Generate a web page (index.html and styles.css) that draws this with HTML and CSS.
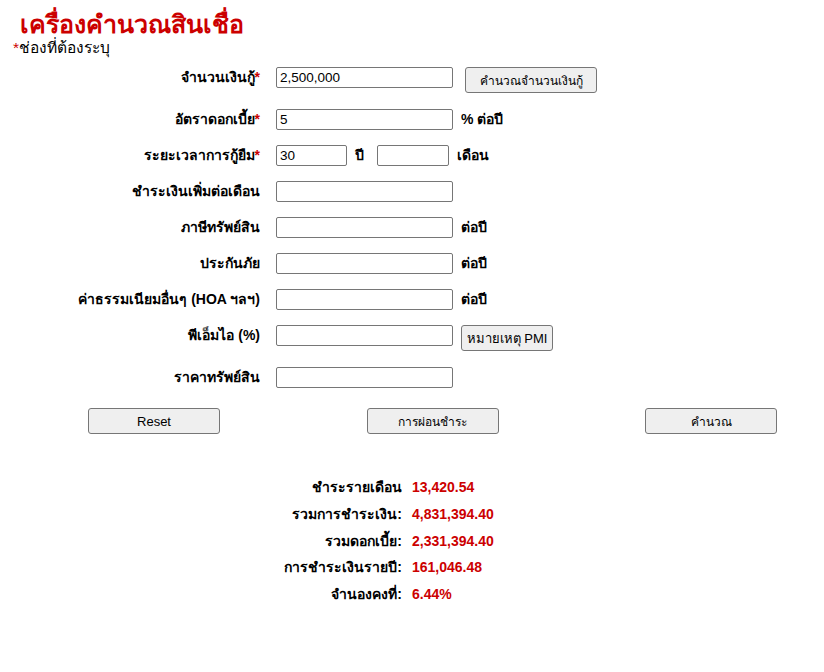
FILE: index.html
```html
<!DOCTYPE html>
<html lang="th">
<head>
<meta charset="utf-8">
<title>เครื่องคำนวณสินเชื่อ</title>
<link rel="stylesheet" href="styles.css">
</head>
<body>
<h1 class="title">เครื่องคำนวณสินเชื่อ</h1>
<div class="req-note"><span class="star">*</span>ช่องที่ต้องระบุ</div>

<form class="calc">
  <div class="row tall">
    <label class="lbl">จำนวนเงินกู้<span class="star">*</span></label>
    <input class="inp" type="text" value="2,500,000">
    <button type="button" class="btn btn-side wide">คำนวณจำนวนเงินกู้</button>
  </div>
  <div class="row">
    <label class="lbl">อัตราดอกเบี้ย<span class="star">*</span></label>
    <input class="inp" type="text" value="5">
    <span class="unit">% ต่อปี</span>
  </div>
  <div class="row">
    <label class="lbl">ระยะเวลาการกู้ยืม<span class="star">*</span></label>
    <input class="inp small" type="text" value="30">
    <span class="unit">ปี</span>
    <input class="inp small second" type="text" value="">
    <span class="unit">เดือน</span>
  </div>
  <div class="row">
    <label class="lbl">ชำระเงินเพิ่มต่อเดือน</label>
    <input class="inp" type="text" value="">
  </div>
  <div class="row">
    <label class="lbl">ภาษีทรัพย์สิน</label>
    <input class="inp" type="text" value="">
    <span class="unit">ต่อปี</span>
  </div>
  <div class="row">
    <label class="lbl">ประกันภัย</label>
    <input class="inp" type="text" value="">
    <span class="unit">ต่อปี</span>
  </div>
  <div class="row">
    <label class="lbl">ค่าธรรมเนียมอื่นๆ (HOA ฯลฯ)</label>
    <input class="inp" type="text" value="">
    <span class="unit">ต่อปี</span>
  </div>
  <div class="row tall">
    <label class="lbl">พีเอ็มไอ (%)</label>
    <input class="inp" type="text" value="">
    <button type="button" class="btn btn-pmi">หมายเหตุ PMI</button>
  </div>
  <div class="row">
    <label class="lbl">ราคาทรัพย์สิน</label>
    <input class="inp" type="text" value="">
  </div>

  <div class="actions">
    <button type="reset" class="btn btn-main reset">Reset</button>
    <button type="button" class="btn btn-main">การผ่อนชำระ</button>
    <button type="button" class="btn btn-main">คำนวณ</button>
  </div>
</form>

<div class="results">
  <div class="r-lbl">ชำระรายเดือน</div><div class="r-val">13,420.54</div>
  <div class="r-lbl">รวมการชำระเงิน:</div><div class="r-val">4,831,394.40</div>
  <div class="r-lbl">รวมดอกเบี้ย:</div><div class="r-val">2,331,394.40</div>
  <div class="r-lbl">การชำระเงินรายปี:</div><div class="r-val">161,046.48</div>
  <div class="r-lbl">จำนองคงที่:</div><div class="r-val">6.44%</div>
</div>
</body>
</html>
```

FILE: styles.css
```css
html, body {
  margin: 0;
  padding: 0;
  background: #ffffff;
}

body {
  font-family: Tahoma, "Liberation Sans", Arial, sans-serif;
  color: #000000;
  width: 824px;
}

.title {
  margin: 0;
  padding: 10px 0 0 20px;
  font-size: 25px;
  line-height: 28px;
  font-weight: bold;
  color: #cc0000;
}

.req-note {
  padding-left: 13px;
  font-size: 15.5px;
  line-height: 18px;
  margin-top: 1px;
}

.star {
  color: #cc0000;
}

.calc {
  margin: 10px 0 0 0;
}

.row {
  display: flex;
  align-items: flex-start;
  margin-bottom: 15px;
}

.row.tall {
  min-height: 27px;
}

.lbl {
  width: 260px;
  flex: none;
  margin-right: 16px;
  text-align: right;
  font-size: 14px;
  font-weight: bold;
  line-height: 21px;
}

.inp {
  box-sizing: border-box;
  width: 177px;
  height: 21px;
  margin: 0;
  padding: 0 3px;
  border: 1px solid #767676;
  border-radius: 2px;
  font-family: "Liberation Sans", Arial, sans-serif;
  font-size: 13.5px;
  color: #000;
  background: #fff;
}

.inp.small {
  width: 71px;
}

.inp.second {
  width: 72px;
  margin-left: 13px;
}

.unit {
  margin-left: 8px;
  font-size: 14px;
  font-weight: bold;
  line-height: 21px;
}

.btn {
  box-sizing: border-box;
  height: 26px;
  margin: 0;
  padding: 0 4px;
  border: 1px solid #767676;
  border-radius: 3px;
  background: #efefef;
  font-family: Tahoma, "Liberation Sans", Arial, sans-serif;
  font-size: 12px;
  color: #000;
}

.btn-side {
  width: 132px;
  margin-left: 12px;
}

.btn-pmi {
  width: 92px;
  margin-left: 8px;
  font-size: 13px;
}

.actions {
  display: flex;
  justify-content: space-between;
  width: 689px;
  margin: 20px 0 0 88px;
}

.btn-main {
  width: 132px;
  height: 26px;
}

.reset {
  font-size: 13px;
}

.results {
  display: grid;
  grid-template-columns: 402px auto;
  column-gap: 10px;
  margin-top: 40px;
  font-size: 14px;
  font-weight: bold;
  line-height: 26.75px;
}

.r-lbl {
  text-align: right;
}

.r-val {
  color: #cc0000;
}
```
